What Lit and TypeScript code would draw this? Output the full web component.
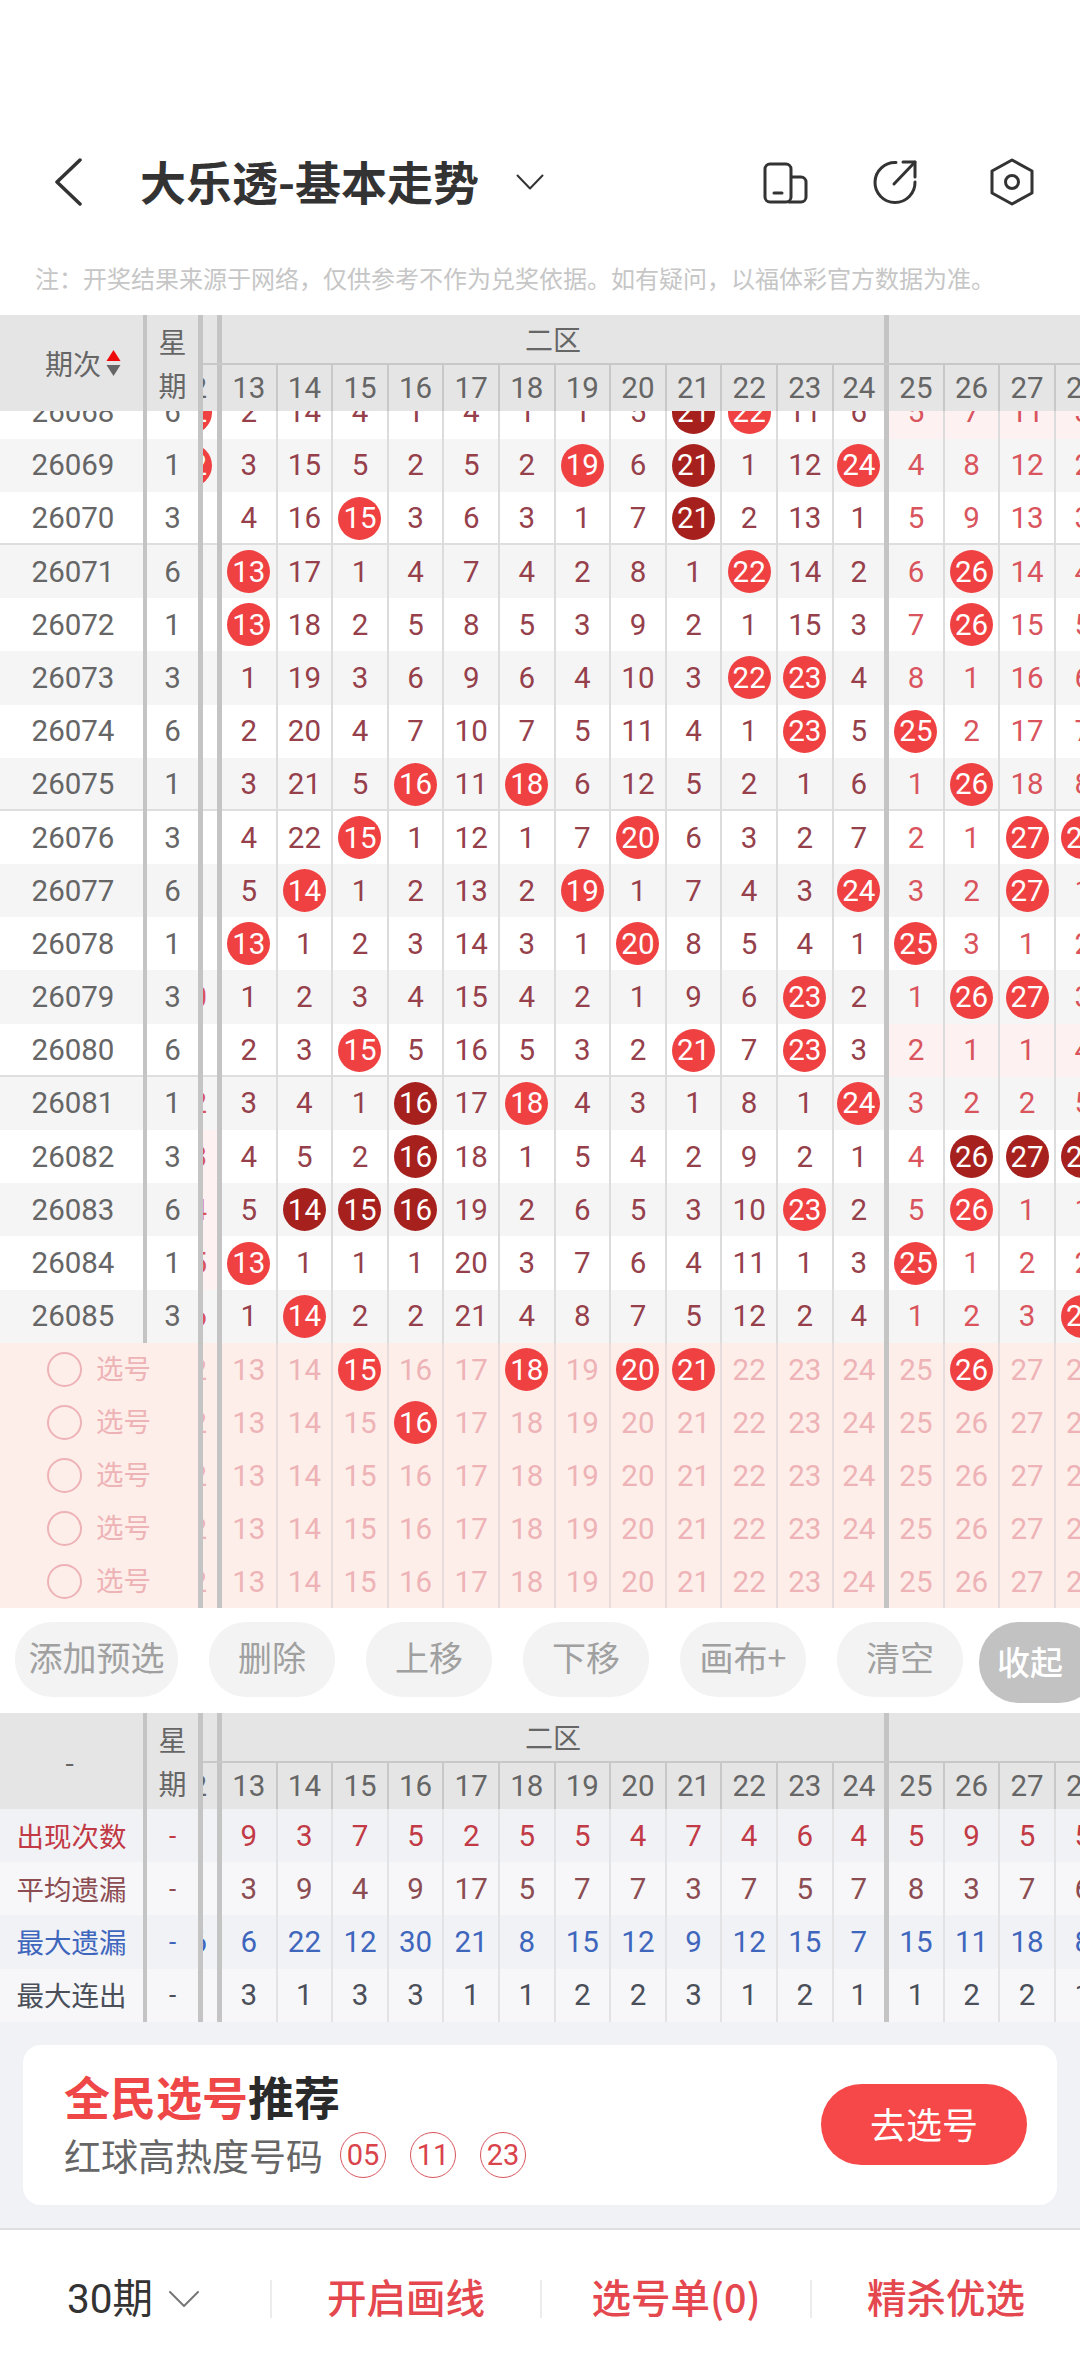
import { LitElement, html, css } from "lit";
import { customElement } from "lit/decorators.js";

const ROWS: [string, string, string][] = [
  ["26068", "6", "b12 2 14 4 1 4 1 1 5 d21 b22 11 6 5 7 11 3"],
  ["26069", "1", "b12 3 15 5 2 5 2 b19 6 d21 1 12 b24 4 8 12 2"],
  ["26070", "3", "1 4 16 b15 3 6 3 1 7 d21 2 13 1 5 9 13 3"],
  ["26071", "6", "2 b13 17 1 4 7 4 2 8 1 b22 14 2 6 b26 14 4"],
  ["26072", "1", "3 b13 18 2 5 8 5 3 9 2 1 15 3 7 b26 15 5"],
  ["26073", "3", "4 1 19 3 6 9 6 4 10 3 b22 b23 4 8 1 16 6"],
  ["26074", "6", "5 2 20 4 7 10 7 5 11 4 1 b23 5 b25 2 17 7"],
  ["26075", "1", "6 3 21 5 b16 11 b18 6 12 5 2 1 6 1 b26 18 8"],
  ["26076", "3", "7 4 22 b15 1 12 1 7 b20 6 3 2 7 2 1 b27 b28"],
  ["26077", "6", "8 5 b14 1 2 13 2 b19 1 7 4 3 b24 3 2 b27 1"],
  ["26078", "1", "9 b13 1 2 3 14 3 1 b20 8 5 4 1 b25 3 1 2"],
  ["26079", "3", "10 1 2 3 4 15 4 2 1 9 6 b23 2 1 b26 b27 3"],
  ["26080", "6", "11 2 3 b15 5 16 5 3 2 b21 7 b23 3 2 1 1 4"],
  ["26081", "1", "12 3 4 1 d16 17 b18 4 3 1 8 1 b24 3 2 2 5"],
  ["26082", "3", "13 4 5 2 d16 18 1 5 4 2 9 2 1 4 d26 d27 d28"],
  ["26083", "6", "14 5 d14 d15 d16 19 2 6 5 3 10 b23 2 5 b26 1 1"],
  ["26084", "1", "15 b13 1 1 1 20 3 7 6 4 11 1 3 b25 1 2 2"],
  ["26085", "3", "16 1 b14 2 2 21 4 8 7 5 12 2 4 1 2 3 b28"],
];
const TINT_ZONE = new Set(["26068", "26080"]);
const TINT_C12 = new Set(["26082", "26083", "26084"]);
const GROUP_END = new Set(["26070", "26075", "26080"]);

const NUMS = [12, 13, 14, 15, 16, 17, 18, 19, 20, 21, 22, 23, 24, 25, 26, 27, 28];
const SEL_BALLS = [[15, 18, 20, 21, 26], [16], [], [], []];

const STATS: [string, string, string][] = [
  ["出现次数", "red", "3 9 3 7 5 2 5 5 4 7 4 6 4 5 9 5 5"],
  ["平均遗漏", "mud", "7 3 9 4 9 17 5 7 7 3 7 5 7 8 3 7 6"],
  ["最大遗漏", "blue", "16 6 22 12 30 21 8 15 12 9 12 15 7 15 11 18 8"],
  ["最大连出", "slate", "1 3 1 3 3 1 1 2 2 3 1 2 1 1 2 2 1"],
];

@customElement("app-root")
export class AppRoot extends LitElement {
  static styles = css`
    :host {
      display: block;
      width: 1080px;
      height: 2372px;
      overflow: hidden;
      background: #fff;
      font-family: Roboto, "Noto Sans CJK SC", sans-serif;
      font-size: 29.5px;
      color: #666;
    }
    .nav {
      height: 100px;
      margin-top: 132px;
      display: flex;
      align-items: center;
      padding-left: 55px;
    }
    .nav svg { flex: none; fill: none; stroke: #333; stroke-linecap: round; stroke-linejoin: round; }
    .title {
      margin-left: 58px;
      padding-bottom: 4px;
      font: 700 46px/1 "Noto Sans CJK SC", sans-serif;
      color: #333;
      white-space: nowrap;
    }
    .tchev { margin-left: 37px; }
    .i1 { margin-left: 218px; }
    .i2 { margin-left: 61px; }
    .i3 { margin-left: 69px; }
    .note {
      height: 83px;
      padding: 28px 0 0 35px;
      box-sizing: border-box;
      font: 400 24px/36px "Noto Sans CJK SC", sans-serif;
      color: #c6c6c6;
      white-space: nowrap;
    }

    .head { display: flex; height: 96px; background: #e5e5e5; }
    .head .p {
      width: 147px;
      box-sizing: border-box;
      border-right: 4px solid #c4c4c4;
      display: flex;
      align-items: center;
      padding-left: 45px;
      gap: 5px;
      font: 400 28px/1 "Noto Sans CJK SC", sans-serif;
    }
    .head .p.dash { padding: 0 4px 0 0; justify-content: center; }
    .head .w {
      width: 56px;
      box-sizing: border-box;
      border-right: 5px solid #c4c4c4;
      display: flex;
      flex-direction: column;
      align-items: center;
      justify-content: center;
      font: 400 28px/44px "Noto Sans CJK SC", sans-serif;
    }
    .head .r { width: 877px; overflow: hidden; }
    .zones {
      display: flex;
      height: 50px;
      box-sizing: border-box;
      border-bottom: 2px solid #c8c8c8;
    }
    .z12 { flex: none; width: 19px; box-sizing: border-box; border-right: 5px solid #c4c4c4; }
    .zone {
      flex: none;
      width: 667px;
      box-sizing: border-box;
      border-right: 5px solid #c4c4c4;
      display: flex;
      align-items: center;
      justify-content: center;
      font: 400 28px/1 "Noto Sans CJK SC", sans-serif;
    }
    .nums { display: flex; height: 46px; }

    .body { height: 932px; overflow: hidden; }
    .body .row:first-child { margin-top: -25.6px; }
    .row { display: flex; height: 53.2px; width: 1080px; overflow: hidden; background: #fff; }
    .row.gray { background: #f5f5f6; }
    .row.end { box-shadow: inset 0 -2px 0 #dedede; }
    .row .p {
      flex: none;
      width: 147px;
      box-sizing: border-box;
      border-right: 4px solid #c4c4c4;
      padding-left: 3px;
      display: flex;
      align-items: center;
      justify-content: center;
    }
    .row .w {
      flex: none;
      width: 56px;
      box-sizing: border-box;
      border-right: 5px solid #c4c4c4;
      display: flex;
      align-items: center;
      justify-content: center;
    }

    .c12 {
      flex: none;
      width: 19px;
      box-sizing: border-box;
      border-right: 5px solid #c4c4c4;
      overflow: hidden;
      display: flex;
      justify-content: flex-end;
    }
    .c12 > div { flex: none; width: 53px; display: flex; align-items: center; justify-content: center; }
    .c {
      flex: none;
      width: 55.6px;
      box-sizing: border-box;
      border-right: 2px solid #dcdcdc;
      display: flex;
      align-items: center;
      justify-content: center;
    }
    .c.last { border-right: 5px solid #c4c4c4; }
    .nums .c { border-right-color: #c8c8c8; }
    .nums .c.last { border-right-color: #c4c4c4; }
    .two { color: #95404a; }
    .three { color: #d9545c; }
    .c12.three, .c12.two { color: #d9545c; }
    .tint { background: #fdf1f1; }
    .ball {
      flex: none;
      width: 43px;
      height: 43px;
      border-radius: 50%;
      background: #f04142;
      color: #fff;
      display: flex;
      align-items: center;
      justify-content: center;
    }
    .ball.dark { background: #a6211e; }

    .row.sel { height: 53px; background: #fdeeea; color: #eeb3b6; }
    .sel .pick {
      flex: none;
      width: 203px;
      box-sizing: border-box;
      border-right: 5px solid #c4c4c4;
      padding-left: 47px;
      display: flex;
      align-items: center;
      gap: 14px;
      font: 400 27.5px/1 "Noto Sans CJK SC", sans-serif;
    }
    .pick span { padding-bottom: 3px; }
    .ring { width: 35px; height: 35px; box-sizing: border-box; border: 2px solid #eeb3b6; border-radius: 50%; }
    .sel .two, .sel .three, .sel .c12.three { color: #eeb3b6; }
    .sel .c { border-right-color: #e6dcdb; }
    .sel .c.last { border-right-color: #c4c4c4; }

    .tools {
      height: 105px;
      box-sizing: border-box;
      padding: 14px 0 0 15px;
      display: flex;
      align-items: flex-start;
      gap: 31px;
      overflow: hidden;
    }
    .tool {
      flex: none;
      height: 75px;
      border-radius: 37px;
      background: #f3f3f3;
      color: #a0a0a0;
      font: 400 34px/70px "Noto Sans CJK SC", sans-serif;
      text-align: center;
      width: 126px;
    }
    .tool.wide { width: 163px; }
    .tool.fold {
      width: 120px;
      height: 81px;
      margin-left: -15px;
      border-radius: 40px;
      background: #c2c2c2;
      color: #fff;
      font-size: 33px;
      font-weight: 500;
      line-height: 79px;
      text-align: left;
      padding-left: 18px;
      box-sizing: border-box;
    }

    .stat { background: #f7f7f9; }
    .stat.odd { background: #f1f2f6; }
    .stat.red { color: #c23a45; }
    .stat.mud { color: #8c4d52; }
    .stat.blue { color: #3f66bd; }
    .stat.slate { color: #4a4f5a; }
    .stat .c { color: inherit; border-right-color: #e3e3e6; }
    .stat .c.last { border-right-color: #c4c4c4; }
    .stat .c12 { color: inherit; }
    .stat .p { padding-left: 0; font: 400 27.5px/1 "Noto Sans CJK SC", sans-serif; }
    .stat .w { font-size: 26px; }

    .promo {
      height: 206px;
      box-sizing: border-box;
      background: #f1f2f6;
      padding: 23px;
    }
    .card {
      height: 160px;
      box-sizing: border-box;
      background: #fff;
      border-radius: 18px;
      padding: 0 30px 0 41px;
      display: flex;
      align-items: center;
      justify-content: space-between;
    }
    .txt { padding-bottom: 4px; }
    .ct { font: 700 46px/56px "Noto Sans CJK SC", sans-serif; color: #2a2a2a; }
    .ct span { color: #ef4747; }
    .cs {
      margin-top: 9px;
      display: flex;
      align-items: center;
      font: 400 37px/46px "Noto Sans CJK SC", sans-serif;
      color: #666;
    }
    .mini {
      flex: none;
      width: 46px;
      height: 46px;
      margin-left: 24px;
      box-sizing: border-box;
      border: 1.5px solid #d9545c;
      border-radius: 50%;
      display: flex;
      align-items: center;
      justify-content: center;
      font: 400 29px/1 Roboto, sans-serif;
      color: #d9434c;
    }
    .mini.first { margin-left: 17px; }
    .go {
      width: 206px;
      height: 81px;
      box-sizing: border-box;
      padding-bottom: 3px;
      border-radius: 41px;
      background: #f64848;
      color: #fff;
      display: flex;
      align-items: center;
      justify-content: center;
      font: 400 36px/1 "Noto Sans CJK SC", sans-serif;
    }

    .bar {
      height: 144px;
      box-sizing: border-box;
      border-top: 2px solid #dedede;
      padding-bottom: 4px;
      display: flex;
      align-items: center;
    }
    .period {
      width: 270px;
      box-sizing: border-box;
      padding-left: 67px;
      display: flex;
      align-items: center;
      gap: 16px;
      font: 400 40.5px/1 Roboto, "Noto Sans CJK SC", sans-serif;
      color: #333;
    }
    .period svg { fill: none; stroke: #777; stroke-width: 2; stroke-linecap: round; stroke-linejoin: round; }
    .act {
      width: 270px;
      box-sizing: border-box;
      border-left: 2px solid #ececec;
      height: 38px;
      padding-bottom: 6px;
      display: flex;
      align-items: center;
      justify-content: center;
      font: 500 39.5px/1 "Noto Sans CJK SC", sans-serif;
      color: #e5474f;
      white-space: nowrap;
    }
  `;

  private val(tok: string) {
    if (tok[0] === "b") return html`<div class="ball">${tok.slice(1)}</div>`;
    if (tok[0] === "d") return html`<div class="ball dark">${tok.slice(1)}</div>`;
    return tok;
  }

  private cells(tokens: (string | number)[], tintZone = false, tintC12 = false) {
    return tokens.map((t, i) => {
      const tok = String(t);
      if (i === 0)
        return html`<div class="c12 three ${tintC12 ? "tint" : ""}"><div>${this.val(tok)}</div></div>`;
      const zone3 = i >= 13;
      return html`<div class="c ${zone3 ? "three" : "two"} ${i === 12 ? "last" : ""} ${zone3 && tintZone ? "tint" : ""}">
        ${this.val(tok)}
      </div>`;
    });
  }

  private head(first: unknown) {
    return html`<div class="head">
      ${first}
      <div class="w"><span>星</span><span>期</span></div>
      <div class="r">
        <div class="zones">
          <div class="z12"></div>
          <div class="zone">二区</div>
        </div>
        <div class="nums">
          <div class="c12"><div>12</div></div>
          ${NUMS.slice(1).map((n, i) => html`<div class="c ${i === 11 ? "last" : ""}">${n}</div>`)}
        </div>
      </div>
    </div>`;
  }

  render() {
    return html`
      <div class="nav">
        <svg width="27" height="48" viewBox="0 0 27 48" stroke-width="3.5"><path d="M25 2 L2 24 L25 46" /></svg>
        <div class="title">大乐透-基本走势</div>
        <svg class="tchev" width="28" height="16" viewBox="0 0 28 16" stroke-width="2"><path d="M1.5 1.5 L14 14.5 L26.5 1.5" /></svg>
        <svg class="i1" width="48" height="48" viewBox="0 0 48 48" stroke-width="3">
          <rect x="3" y="6" width="26" height="38" rx="5" />
          <path d="M30 19 H39 a5 5 0 0 1 5 5 V39 a5 5 0 0 1 -5 5 H27" />
          <path d="M12 35 H20" />
        </svg>
        <svg class="i2" width="48" height="48" viewBox="0 0 48 48" stroke-width="3">
          <path d="M25 4.5 A20 20 0 1 0 44 24" />
          <path d="M32 4 H44 V19" />
          <path d="M44 4 L23 26" />
        </svg>
        <svg class="i3" width="48" height="48" viewBox="0 0 48 48" stroke-width="3">
          <path d="M24 2 L44 13 V35 L24 46 L4 35 V13 Z" />
          <circle cx="24" cy="24" r="6.5" />
        </svg>
      </div>
      <div class="note">注：开奖结果来源于网络，仅供参考不作为兑奖依据。如有疑问，以福体彩官方数据为准。</div>

      ${this.head(html`<div class="p">
        <span>期次</span>
        <svg width="15" height="28" viewBox="0 0 15 28">
          <path d="M7.5 1 L14.5 12 H0.5 Z" fill="#ee0a0a" />
          <path d="M7.5 27 L14.5 16 H0.5 Z" fill="#666" />
        </svg>
      </div>`)}

      <div class="body">
        ${ROWS.map(([id, wk, data], i) => html`<div class="row ${i % 2 === 1 ? "gray" : ""} ${GROUP_END.has(id) ? "end" : ""}">
          <div class="p">${id}</div>
          <div class="w">${wk}</div>
          ${this.cells(data.split(" "), TINT_ZONE.has(id), TINT_C12.has(id))}
        </div>`)}
      </div>

      ${SEL_BALLS.map((balls) => html`<div class="row sel">
        <div class="pick"><div class="ring"></div><span>选号</span></div>
        ${this.cells(NUMS.map((n) => (balls.includes(n) ? "b" + n : String(n))))}
      </div>`)}

      <div class="tools">
        <div class="tool wide">添加预选</div>
        <div class="tool">删除</div>
        <div class="tool">上移</div>
        <div class="tool">下移</div>
        <div class="tool">画布+</div>
        <div class="tool">清空</div>
        <div class="tool fold">收起</div>
      </div>

      ${this.head(html`<div class="p dash">-</div>`)}

      ${STATS.map(([label, tone, data], i) => html`<div class="row stat ${tone} ${i % 2 === 0 ? "odd" : ""}">
        <div class="p">${label}</div>
        <div class="w">-</div>
        ${this.cells(data.split(" "))}
      </div>`)}

      <div class="promo">
        <div class="card">
          <div class="txt">
            <div class="ct"><span>全民选号</span>推荐</div>
            <div class="cs">
              红球高热度号码
              <div class="mini first">05</div>
              <div class="mini">11</div>
              <div class="mini">23</div>
            </div>
          </div>
          <div class="go">去选号</div>
        </div>
      </div>

      <div class="bar">
        <div class="period">
          <span>30期</span>
          <svg width="30" height="16" viewBox="0 0 30 16"><path d="M1 1 L15 15 L29 1" /></svg>
        </div>
        <div class="act">开启画线</div>
        <div class="act">选号单(0)</div>
        <div class="act">精杀优选</div>
      </div>
    `;
  }
}
